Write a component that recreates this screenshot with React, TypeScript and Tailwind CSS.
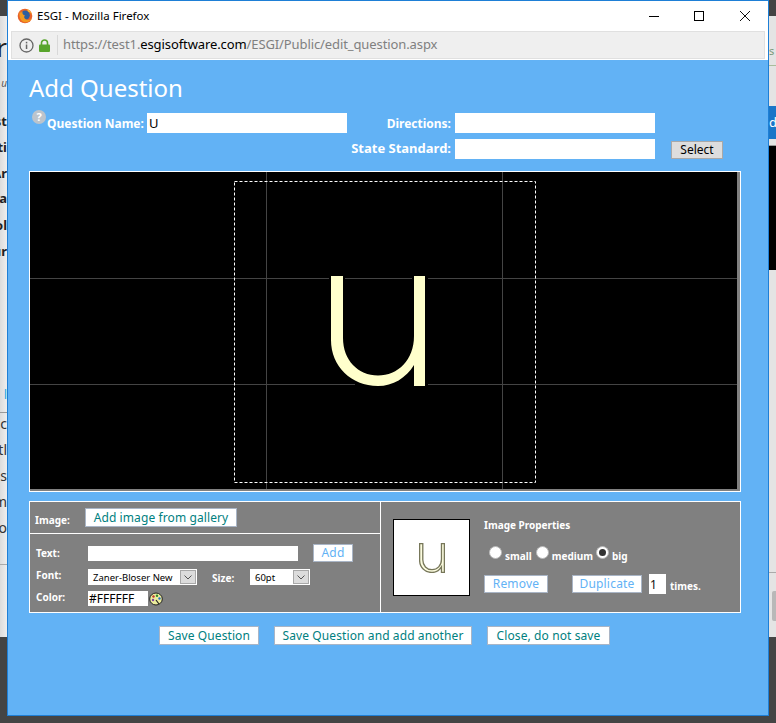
const LEFT_EDGE = [
  { text: "st", h: "h-[26px]" },
  { text: "ti", h: "h-[26px]" },
  { text: "Ar", h: "h-[25px]" },
  { text: "la", h: "h-[26px]" },
  { text: "ol", h: "h-[27px]" },
  { text: "ur", h: "h-[26px]" },
];

const LOWER_EDGE = ["ac", "tl", "s", "m", "Vo"];

const U_PATH =
  "M331 276H343V338C343 360 358 375.5 378 375.5C398 375.5 414 360 414 336V276H425V386H414V365C406 378 393 386 378 386C351 386 331 366 331 340Z";

function FirefoxIcon() {
  return (
    <svg width="16" height="16" viewBox="0 0 16 16" className="shrink-0">
      <circle cx="8" cy="8" r="7.3" fill="#e8622a" />
      <circle cx="8.2" cy="7.2" r="4.6" fill="#2f5f9e" />
      <path d="M3 3C2 6 2 10 5 13C8 15.500 13 14.500 15 10C14 12 11 12.500 9 11.500C7 10.500 6.500 8.500 8 7.500C6 7 5 5.500 5.500 3.500C4.500 4 4 4.500 3.700 5Z" fill="#f39a1f" />
      <path d="M10 1C12.500 2 14.500 4.500 15 7C14 5 12.500 3.800 11 3.500Z" fill="#f7c52b" />
    </svg>
  );
}

function WindowControls() {
  return (
    <div className="ml-auto flex items-center">
      <span className="h-px w-[10px] bg-black" />
      <span className="ml-[35px] h-[10px] w-[10px] border border-black" />
      <svg width="10" height="10" viewBox="0 0 10 10" className="ml-[36px] mr-[18px]">
        <path d="M0 0L10 10M10 0L0 10" stroke="#111" strokeWidth="1" fill="none" />
      </svg>
    </div>
  );
}

function TealButton({ label, width }: { label: string; width: string }) {
  return (
    <button className={`block h-[19px] ${width} shrink-0 whitespace-nowrap border border-[#a9b5c6] bg-white text-center text-[12px] font-normal leading-[17px] tracking-[0.1px] text-[#008080]`}>
      {label}
    </button>
  );
}

function BlueButton({ label, width, height }: { label: string; width: string; height: string }) {
  return (
    <button className={`block ${height} ${width} shrink-0 border border-[#a9b5c6] bg-white text-center text-[12px] font-normal leading-[16px] tracking-[0.2px] text-[#62b2f5]`}>
      {label}
    </button>
  );
}

function FakeSelect({ value, width }: { value: string; width: string }) {
  return (
    <div className={`flex h-[16px] ${width} shrink-0 items-center bg-white pl-[5px] text-[9.5px] text-black`}>
      <span className="flex-1 whitespace-nowrap pt-[2px]">{value}</span>
      <span className="mr-px flex h-[14px] w-[16px] shrink-0 items-center justify-center border border-[#a8a8a8] bg-[#dcdcdc]">
        <svg width="8" height="5" viewBox="0 0 8 5">
          <path d="M0.500 0.500L4 4L7.500 0.500" stroke="#555" strokeWidth="1" fill="none" />
        </svg>
      </span>
    </div>
  );
}

function Radio({ checked, label }: { checked?: boolean; label: string }) {
  return (
    <div className="flex items-start">
      <span className="flex h-[13px] w-[13px] items-center justify-center rounded-full border border-[#b8b8b8] bg-white">
        {checked && <span className="h-[7px] w-[7px] rounded-full bg-[#333]" />}
      </span>
      <span className="ml-[3px] mt-[4px] text-[10px] font-bold leading-[13px] text-white">{label}</span>
    </div>
  );
}

export default function App() {
  return (
    <div className="flex h-[723px] w-[776px] overflow-hidden bg-[#444] font-['Noto_Sans',sans-serif]">
      {/* page behind the popup, left edge */}
      <div className="flex h-[637px] w-[7px] shrink-0 flex-col overflow-hidden bg-gradient-to-r from-[#dcdcdc] to-[#eeeeee]">
        <div className="h-[16px] shrink-0 bg-[#444]" />
        <div className="flex h-[46px] shrink-0 items-end justify-end pb-[2px] text-[26px] leading-none text-[#222]">
          <span>r</span>
        </div>
        <div className="flex h-[47px] shrink-0 items-start justify-end pt-[14px] text-[10px] italic text-[#555]">
          <span>u</span>
        </div>
        {LEFT_EDGE.map((row) => (
          <div key={row.text} className={`flex ${row.h} shrink-0 items-center justify-end text-[13px] font-bold text-[#222]`}>
            <span>{row.text}</span>
          </div>
        ))}
        <div className="flex h-[147px] shrink-0 items-end justify-end pb-[8px] text-[13px] text-[#29a9e0]">
          <span>l</span>
        </div>
        <div className="h-px shrink-0 bg-[#999]" />
        {LOWER_EDGE.map((text) => (
          <div key={text} className="flex h-[26px] shrink-0 items-start justify-end text-[14px] text-[#333]">
            <span>{text}</span>
          </div>
        ))}
        <div className="mt-[21px] h-px shrink-0 bg-[#aaa]" />
      </div>

      {/* popup window */}
      <div className="flex h-[716px] w-[762px] shrink-0 flex-col border border-[#1e7fd6] bg-[#62b2f5]">
        <div className="flex h-[30px] shrink-0 items-center bg-white pl-[9px] text-[11.5px] text-black">
          <FirefoxIcon />
          <span className="ml-[4px]">ESGI - Mozilla Firefox</span>
          <WindowControls />
        </div>

        <div className="h-[29px] shrink-0 bg-white px-[3px]">
          <div className="flex h-[28px] items-center border border-[#e0e0e0] bg-[#efefef] pl-[7px] text-[13px] tracking-[-0.1px] text-[#808080]">
            <svg width="15" height="15" viewBox="0 0 15 15" className="shrink-0">
              <circle cx="7.500" cy="7.500" r="6.500" fill="none" stroke="#666" strokeWidth="1.300" />
              <rect x="6.800" y="6.500" width="1.500" height="4.500" fill="#666" />
              <rect x="6.800" y="3.800" width="1.500" height="1.600" fill="#666" />
            </svg>
            <svg width="11" height="13" viewBox="0 0 11 13" className="ml-[5px] shrink-0">
              <path d="M2.500 6V3.800C2.500 2.200 3.800 1 5.500 1S8.500 2.200 8.500 3.800V6" fill="none" stroke="#58a52c" strokeWidth="1.600" />
              <rect x="0" y="5.500" width="11" height="7.500" rx="1" fill="#58a52c" />
            </svg>
            <span className="ml-[7px] h-[20px] w-px bg-[#d8d8d8]" />
            <span className="ml-[5px] whitespace-nowrap">
              https://test1.<span className="text-black">esgisoftware.com</span>/ESGI/Public/edit_question.aspx
            </span>
          </div>
        </div>

        <div className="flex flex-1 flex-col pl-[21px] pt-[13px]">
          <h1 className="h-[30px] text-[24px] font-normal leading-[30px] text-white">Add Question</h1>

          <div className="mt-[10px] flex h-[20px] items-center font-bold text-white">
            <span className="-mt-[3px] ml-[3px] flex h-[14px] w-[14px] shrink-0 self-start items-center justify-center rounded-full bg-[#bcc4cc] text-[11px] text-white">?</span>
            <span className="ml-px w-[100px] shrink-0 whitespace-nowrap pt-[2px] text-[12px]">Question Name:</span>
            <input readOnly defaultValue="U" className="h-[20px] w-[200px] shrink-0 bg-white px-[2px] text-[13px] font-normal text-black" />
            <span className="w-[108px] shrink-0 whitespace-nowrap pr-[4px] pt-[2px] text-right text-[12px]">Directions:</span>
            <input readOnly className="h-[20px] w-[200px] shrink-0 bg-white" />
          </div>

          <div className="mt-[6px] flex h-[20px] items-center text-[13px] font-bold text-white">
            <span className="w-[426px] shrink-0 pr-[4px] text-right">State Standard:</span>
            <input readOnly className="h-[20px] w-[200px] shrink-0 bg-white" />
            <button className="ml-[16px] mt-[1px] block h-[18px] w-[52px] border border-[#a8a8a8] bg-[#dddddd] text-[12px] font-normal leading-[16px] text-black">
              Select
            </button>
          </div>

          {/* question canvas */}
          <div className="mt-[12px] h-[321px] w-[712px] border border-white">
            <div className="h-[319px] w-[710px] border-b-[2px] border-r-[3px] border-[#808080] bg-black">
              <svg width="707" height="317" viewBox="30 172 707 317" className="block">
                <path d="M30 278.500H329M345 278.500H412M428 278.500H737M30 384.500H355M428 384.500H737M266.500 172V489M502.500 172V489" stroke="#444" strokeWidth="1" fill="none" />
                <rect x="234.500" y="181.500" width="301" height="301" fill="none" stroke="#fff" strokeWidth="1" strokeDasharray="3 2" />
                <path d={U_PATH} fill="#ffffcc" />
              </svg>
            </div>
          </div>

          {/* image and text tools */}
          <div className="mt-[9px] flex h-[112px] w-[712px] border border-white bg-[#808080] text-white">
            <div className="w-[351px] shrink-0 border-r border-white">
              <div className="flex h-[32px] items-center border-b border-white pb-[1px] pl-[5px]">
                <span className="w-[50px] pt-[6px] text-[10px] font-bold">Image:</span>
                <TealButton label="Add image from gallery" width="w-[152px]" />
              </div>

              <div className="pl-[6px] pt-[10px] text-[10px] font-bold">
                <div className="flex h-[18px] items-center">
                  <span className="w-[52px]">Text:</span>
                  <input readOnly className="h-[15px] w-[210px] bg-white" />
                  <span className="ml-[15px]">
                    <BlueButton label="Add" width="w-[40px]" height="h-[18px]" />
                  </span>
                </div>
                <div className="mt-[7px] flex h-[16px] items-center font-normal">
                  <span className="-mt-[3px] w-[52px] font-bold">Font:</span>
                  <FakeSelect value="Zaner-Bloser New" width="w-[109px]" />
                  <span className="ml-[15px] mt-[2px] w-[38px] font-bold">Size:</span>
                  <FakeSelect value="60pt" width="w-[60px]" />
                </div>
                <div className="mt-[6px] flex h-[15px] items-center">
                  <span className="-mt-[2px] w-[52px]">Color:</span>
                  <input readOnly defaultValue="#FFFFFF" className="h-[15px] w-[60px] bg-white px-[1px] text-[12px] font-normal text-black" />
                  <svg width="14" height="14" viewBox="0 0 14 14" className="ml-px">
                    <ellipse cx="7" cy="7" rx="6.300" ry="6" fill="#ecec9c" stroke="#222" strokeWidth="1" />
                    <circle cx="4.500" cy="4.500" r="1.200" fill="#c0392b" />
                    <circle cx="8" cy="3.800" r="1.200" fill="#2e8b2e" />
                    <circle cx="10.500" cy="6.500" r="1.200" fill="#2a6fc9" />
                    <circle cx="4" cy="8" r="1.200" fill="#7a3fa0" />
                    <path d="M7 8L10 12" stroke="#222" strokeWidth="1.200" />
                  </svg>
                </div>
              </div>
            </div>

            <div className="flex flex-1">
              <div className="ml-[12px] mt-[17px] flex h-[77px] w-[77px] shrink-0 items-center justify-center border border-black bg-white">
                <svg width="26" height="30" viewBox="329 274 98 114">
                  <path d={U_PATH} fill="#fdfde0" stroke="#77775a" strokeWidth="5" />
                </svg>
              </div>

              <div className="ml-[14px] flex flex-col">
                <span className="mt-[16px] h-[14px] text-[10px] font-bold leading-[14px]">Image Properties</span>
                <div className="ml-[5px] mt-[14px] flex h-[18px]">
                  <Radio label="small" />
                  <span className="ml-[4px] block">
                    <Radio label="medium" />
                  </span>
                  <span className="ml-[3px] block">
                    <Radio checked label="big" />
                  </span>
                </div>
                <div className="mt-[10px] flex items-start">
                  <span className="mt-px block">
                    <BlueButton label="Remove" width="w-[64px]" height="h-[18px]" />
                  </span>
                  <span className="ml-[24px] mt-px block">
                    <BlueButton label="Duplicate" width="w-[70px]" height="h-[18px]" />
                  </span>
                  <input readOnly defaultValue="1" className="ml-[7px] h-[20px] w-[17px] bg-white px-[1px] text-[12px] text-[#111]" />
                  <span className="ml-[4px] mt-[5px] text-[10px] font-bold leading-[14px]">times.</span>
                </div>
              </div>
            </div>
          </div>

          <div className="ml-[130px] mt-[13px] flex gap-[15px]">
            <TealButton label="Save Question" width="w-[100px]" />
            <TealButton label="Save Question and add another" width="w-[198px]" />
            <TealButton label="Close, do not save" width="w-[123px]" />
          </div>
        </div>
      </div>

      {/* page behind the popup, right edge */}
      <div className="flex h-[637px] w-[7px] shrink-0 flex-col overflow-hidden bg-[#e4e4e4]">
        <div className="h-[16px] shrink-0 bg-[#444]" />
        <div className="flex h-[50px] shrink-0 items-end justify-start border-b border-[#a9bd9c] pb-[6px] text-[11px] text-[#7a9a7a]">
          <span>s</span>
        </div>
        <div className="h-[40px] shrink-0" />
        <div className="flex h-[33px] shrink-0 items-center bg-[#1976c8] text-[13px] text-white">
          <span>d</span>
        </div>
        <div className="h-[7px] shrink-0 border-b border-[#999]" />
        <div className="h-[124px] shrink-0 bg-black" />
        <div className="h-[303px] shrink-0 border-b border-[#aaa]" />
        <div className="mt-[18px] ml-[3px] h-[30px] rounded-l-[2px] bg-[#b8b8b8]" />
      </div>
    </div>
  );
}
